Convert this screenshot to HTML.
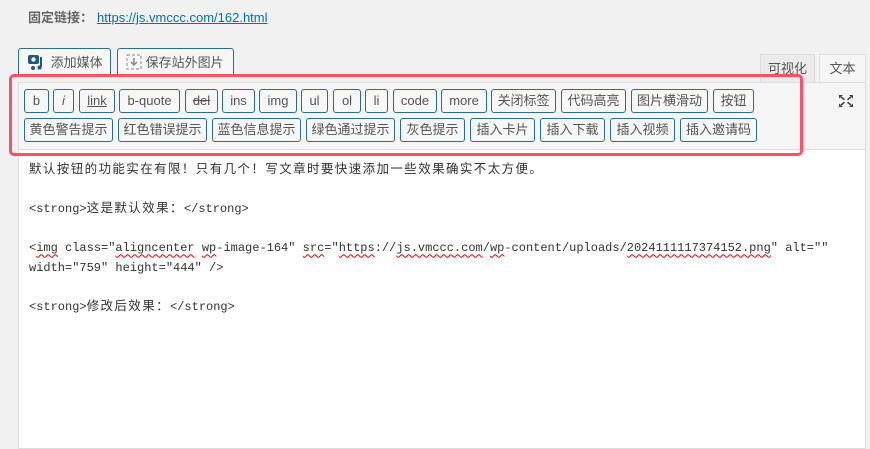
<!DOCTYPE html>
<html><head><meta charset="utf-8"><style>
*{margin:0;padding:0;box-sizing:border-box}
body{width:870px;height:445px;overflow:hidden;background:#f1f1f1;font-family:"Liberation Sans","Noto Sans CJK SC",sans-serif;position:relative;color:#555}
.a{position:absolute}
.pl{left:28px;top:7px;font-size:13px;color:#666;font-weight:bold}
.pl a{color:#0073aa;font-weight:normal;margin-left:4px;text-decoration:underline}
.mb{top:48px;height:29px;border:1px solid #2c6e8f;border-radius:3px;background:#f7f7f7;font-size:13px;color:#555;line-height:27px}
.tab{top:54px;height:29px;border:1px solid #ddd;border-bottom:none;font-size:13px;line-height:27px;text-align:center;color:#555;background:#ebebeb}
.tb{left:18px;top:82px;width:848px;height:68px;background:#f5f5f5;border:1px solid #ddd}
.ta{left:18px;top:149px;width:848px;height:300px;background:#fff;border:1px solid #ddd}
.b{position:absolute;height:24px;border:1px solid #2c6e8f;border-radius:3px;background:#f7f7f7;font-size:13px;line-height:22px;text-align:center;color:#555}
.r{left:9px;top:74px;width:794px;height:82px;border:3px solid #fb5068;border-radius:5px}
pre{position:absolute;left:29px;top:161px;font-family:"Liberation Mono","Noto Sans CJK SC",monospace;font-size:12px;line-height:19.6px;color:#333}
.c{font-family:"Noto Sans CJK SC",sans-serif;font-size:12.5px;letter-spacing:1.4px;line-height:10px}
.s{text-decoration:underline wavy #e00;text-decoration-thickness:1px;text-underline-offset:2px}
</style></head><body>
<div class="a pl">固定链接：<a>https://js.vmccc.com/162.html</a></div>
<div class="a mb" style="left:18px;width:93px;padding-left:8px"><svg width="20" height="18" viewBox="0 0 20 18" style="vertical-align:-4px"><rect x="1" y="2" width="11" height="9" rx="2" fill="#1e5b7a"/><circle cx="6.5" cy="6.5" r="2.2" fill="#f7f7f7"/><path d="M14 4v10" stroke="#1e5b7a" stroke-width="2"/><circle cx="12.5" cy="14.5" r="2" fill="#1e5b7a"/><circle cx="6" cy="15" r="2" fill="#1e5b7a"/></svg> 添加媒体</div>
<div class="a mb" style="left:117px;width:117px;padding-left:8px"><svg width="16" height="16" viewBox="0 0 16 16" style="vertical-align:-3px"><rect x="1" y="1" width="14" height="14" fill="none" stroke="#888" stroke-dasharray="3 2"/><path d="M8 4v7M5 8l3 3 3-3" stroke="#888" fill="none" stroke-width="1.5"/></svg> 保存站外图片</div>
<div class="a tab" style="left:760px;width:55px">可视化</div>
<div class="a tab" style="left:819px;width:47px;background:#f5f5f5;height:30px">文本</div>
<div class="a tb"></div>
<div class="a ta"></div>
<div class="b" style="left:24px;top:89px;width:25px">b</div>
<div class="b" style="left:53px;top:89px;width:21px;font-style:italic">i</div>
<div class="b" style="left:79px;top:89px;width:36px;text-decoration:underline">link</div>
<div class="b" style="left:119px;top:89px;width:61px">b-quote</div>
<div class="b" style="left:185px;top:89px;width:33px;text-decoration:line-through">del</div>
<div class="b" style="left:222px;top:89px;width:33px">ins</div>
<div class="b" style="left:259px;top:89px;width:38px">img</div>
<div class="b" style="left:301px;top:89px;width:27px">ul</div>
<div class="b" style="left:333px;top:89px;width:28px">ol</div>
<div class="b" style="left:365px;top:89px;width:23px">li</div>
<div class="b" style="left:393px;top:89px;width:44px">code</div>
<div class="b" style="left:441px;top:89px;width:46px">more</div>
<div class="b" style="left:491px;top:89px;width:65px">关闭标签</div>
<div class="b" style="left:561px;top:89px;width:65px">代码高亮</div>
<div class="b" style="left:631px;top:89px;width:77px">图片横滑动</div>
<div class="b" style="left:713px;top:89px;width:41px">按钮</div>
<div class="b" style="left:24px;top:118px;width:89px">黄色警告提示</div>
<div class="b" style="left:118px;top:118px;width:89px">红色错误提示</div>
<div class="b" style="left:212px;top:118px;width:89px">蓝色信息提示</div>
<div class="b" style="left:306px;top:118px;width:89px">绿色通过提示</div>
<div class="b" style="left:400px;top:118px;width:65px">灰色提示</div>
<div class="b" style="left:470px;top:118px;width:65px">插入卡片</div>
<div class="b" style="left:540px;top:118px;width:65px">插入下载</div>
<div class="b" style="left:610px;top:118px;width:65px">插入视频</div>
<div class="b" style="left:680px;top:118px;width:77px">插入邀请码</div>
<svg class="a" style="left:838px;top:94px" width="16" height="14" viewBox="0 0 16 14"><path d="M1 1h4L1 4.5zM15 1h-4l4 3.5zM1 13h4L1 9.5zM15 13h-4l4-3.5z" fill="#444"/><path d="M3 3l3.5 2.8M13 3l-3.5 2.8M3 11l3.5-2.8M13 11l-3.5-2.8" stroke="#444" stroke-width="1.6"/></svg>
<div class="a r"></div>
<pre><span class="c">默认按钮的功能实在有限！只有几个！写文章时要快速添加一些效果确实不太方便。</span>

&lt;strong&gt;<span class="c">这是默认效果：</span>&lt;/strong&gt;

&lt;<span class="s">img</span> class="<span class="s">aligncenter</span> <span class="s">wp</span>-image-164" <span class="s">src</span>="<span class="s">https</span>://<span class="s">js.vmccc.com</span>/<span class="s">wp</span>-content/uploads/<span class="s">2024111117374152.png</span>" alt=""
width="759" height="444" /&gt;

&lt;strong&gt;<span class="c">修改后效果：</span>&lt;/strong&gt;</pre>
</body></html>
